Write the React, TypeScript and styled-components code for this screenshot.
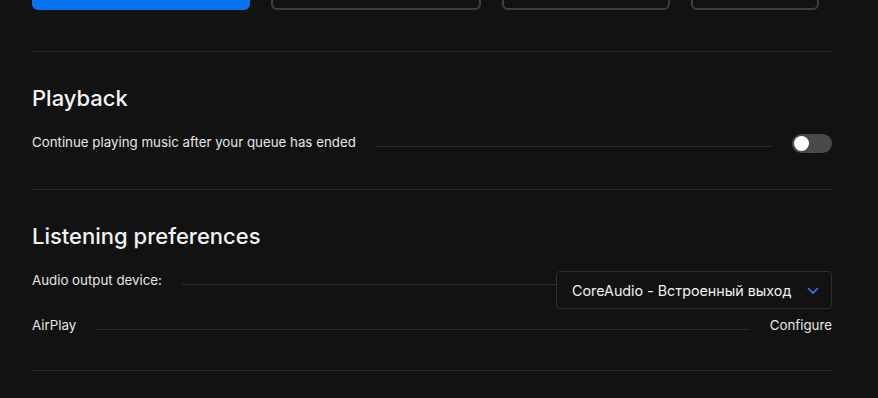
import styled, { createGlobalStyle } from "styled-components";

const GlobalStyle = createGlobalStyle`
  html, body {
    margin: 0;
    padding: 0;
    background: #121212;
    overflow: hidden;
  }
  body {
    font-family: Inter, "Noto Sans", sans-serif;
    color: #f0f0f0;
  }
`;

const Page = styled.div`
  width: 800px;
  margin-left: 32px;
`;

const Section = styled.section`
  padding: 31px 0 36px;
  border-bottom: 1px solid #2a2a2a;
`;

const ButtonRow = styled.div`
  display: flex;
  gap: 21px;
  margin-top: -30px;
  padding-bottom: 41px;
  border-bottom: 1px solid #2a2a2a;
`;

const ChoiceButton = styled.button<{ $active?: boolean; $w: number }>`
  width: ${(p) => p.$w}px;
  height: 40px;
  border-radius: 6px;
  border: 2px solid ${(p) => (p.$active ? "#0a72ec" : "#3f3f3f")};
  background: ${(p) => (p.$active ? "#0a72ec" : "transparent")};
  color: #fff;
  font-family: Inter, sans-serif;
  font-size: 14px;
  font-weight: 500;
`;

const Heading = styled.h2`
  margin: 0 0 20px;
  font-size: 22px;
  line-height: 30px;
  font-weight: 500;
  color: #f2f2f2;
`;

const Rows = styled.div`
  display: flex;
  flex-direction: column;
  gap: 7px;
`;

const Row = styled.div`
  display: flex;
  align-items: flex-start;
`;

const Label = styled.span`
  font-size: 13.3px;
  line-height: 18px;
  color: #e6e6e6;
  white-space: nowrap;
`;

const Leader = styled.div<{ $gapRight: number }>`
  flex: 1;
  height: 1px;
  background: #2e2e2e;
  margin: 13px ${(p) => p.$gapRight}px 0 20px;
`;

const Toggle = styled.div`
  width: 40px;
  height: 19px;
  margin-top: 1px;
  border-radius: 10px;
  background: #4a4a4a;
  display: flex;
  align-items: center;
  padding-left: 2px;
  box-sizing: border-box;
`;

const Knob = styled.div`
  width: 15px;
  height: 15px;
  border-radius: 50%;
  background: #fff;
`;

const Select = styled.div`
  width: 276px;
  height: 38px;
  box-sizing: border-box;
  border: 1px solid #2e2e2e;
  border-radius: 4px;
  display: flex;
  align-items: center;
  justify-content: space-between;
  padding: 0 11px 0 15px;
  font-size: 14.3px;
  color: #f0f0f0;
`;

const LinkText = styled.span`
  font-size: 13.3px;
  line-height: 18px;
  color: #e6e6e6;
`;

function Chevron() {
  return (
    <svg width="14" height="14" viewBox="0 0 14 14" fill="none">
      <path d="M2 5l5 5 5-5" stroke="#2d80f5" strokeWidth="1.6" />
    </svg>
  );
}

export default function App() {
  return (
    <>
      <GlobalStyle />
      <Page>
        <ButtonRow>
          <ChoiceButton $active $w={218}>Spotify</ChoiceButton>
          <ChoiceButton $w={210}>Playlist</ChoiceButton>
          <ChoiceButton $w={168}>Library</ChoiceButton>
          <ChoiceButton $w={128}>Quality</ChoiceButton>
        </ButtonRow>

        <Section>
          <Heading>Playback</Heading>
          <Row>
            <Label>Continue playing music after your queue has ended</Label>
            <Leader $gapRight={20} />
            <Toggle>
              <Knob />
            </Toggle>
          </Row>
        </Section>

        <Section>
          <Heading>Listening preferences</Heading>
          <Rows>
            <Row>
              <Label>Audio output device:</Label>
              <Leader $gapRight={0} />
              <Select>
                <span>CoreAudio - Встроенный выход</span>
                <Chevron />
              </Select>
            </Row>
            <Row>
              <Label>AirPlay</Label>
              <Leader $gapRight={21} />
              <LinkText>Configure</LinkText>
            </Row>
          </Rows>
        </Section>
      </Page>
    </>
  );
}
